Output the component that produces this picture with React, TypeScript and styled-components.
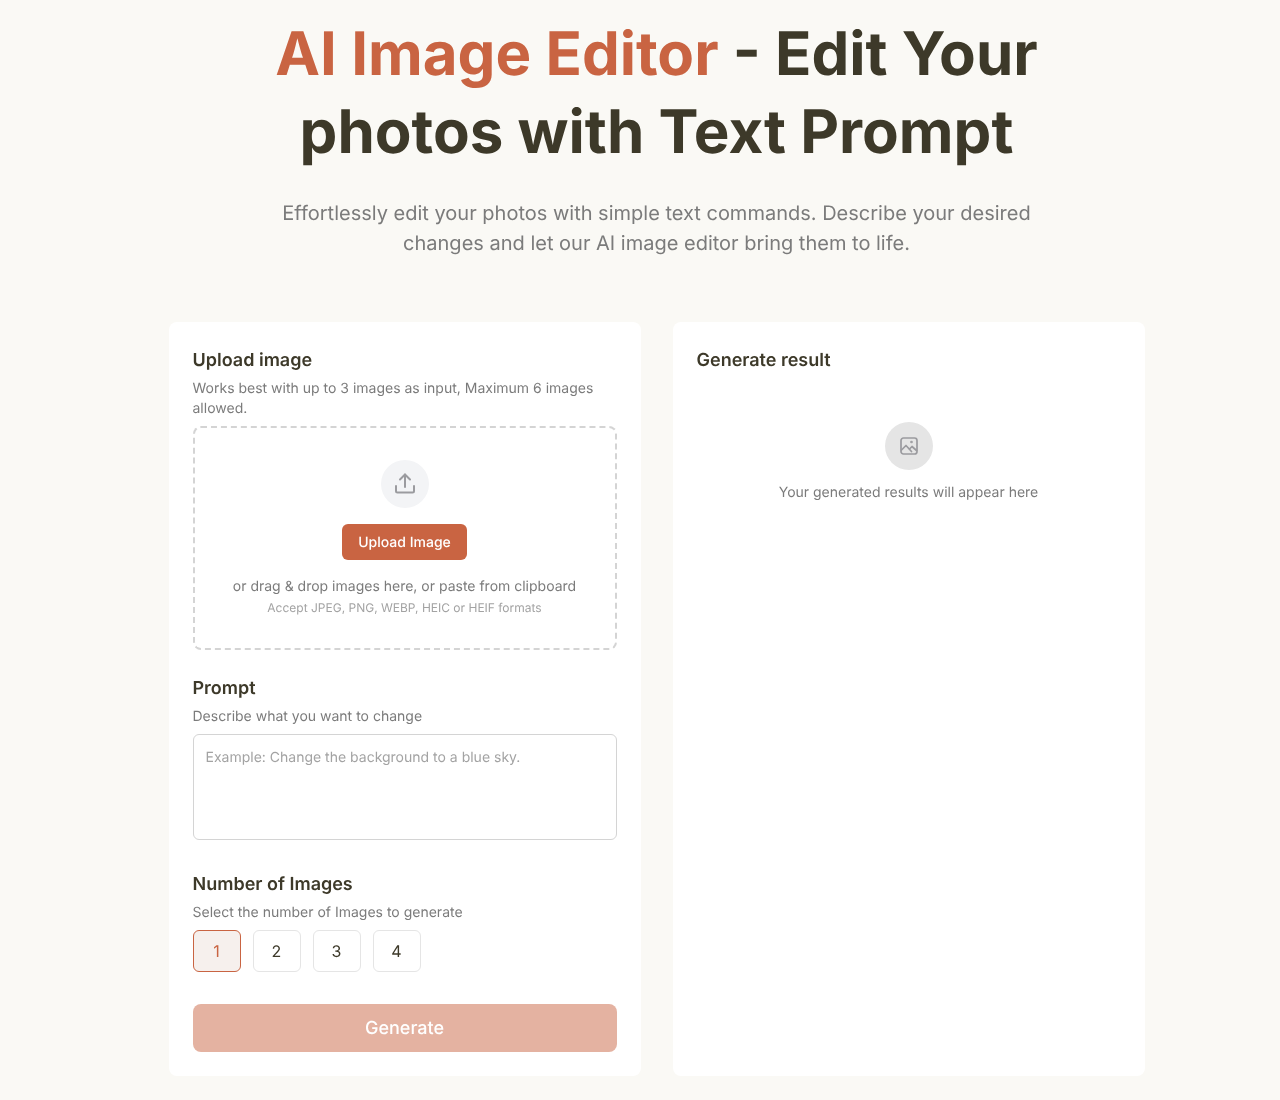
import React, { useState } from "react";
import styled, { createGlobalStyle } from "styled-components";

const GlobalStyle = createGlobalStyle`
  * {
    box-sizing: border-box;
  }
  html, body {
    margin: 0;
    background: #faf9f5;
  }
  body {
    font-family: Inter, "Liberation Sans", sans-serif;
    color: #3d3929;
    text-rendering: geometricPrecision;
  }
`;

const Page = styled.main`
  width: 1280px;
  height: 1100px;
  padding: 15px 135.5px 0 168.5px;
  overflow: hidden;
  will-change: transform;
`;

const Hero = styled.header`
  display: flex;
  flex-direction: column;
  align-items: center;
  margin-bottom: 64px;
`;

const Heading = styled.h1`
  width: 800px;
  margin: 0 0 27px;
  font-size: 60px;
  line-height: 78px;
  font-weight: 700;
  text-align: center;
  color: #3d3929;
`;

const Accent = styled.span`
  color: #c96442;
`;

const Lead = styled.p`
  width: 768px;
  margin: 0;
  font-size: 20px;
  line-height: 30px;
  text-align: center;
  color: #7b7b7b;
`;

const Columns = styled.div`
  display: grid;
  grid-template-columns: 472px 472px;
  gap: 32px;
`;

const Card = styled.section`
  height: 754px;
  padding: 24px;
  background: #fff;
  border-radius: 8px;
`;

const SectionTitle = styled.h2`
  margin: 0 0 3px;
  padding-top: 1px;
  font-size: 18px;
  line-height: 28px;
  font-weight: 600;
  color: #3d3929;
`;

const Hint = styled.p`
  margin: 0 0 7px;
  padding-top: 1px;
  font-size: 14px;
  line-height: 20px;
  color: #7b7b7b;
`;

const Dropzone = styled.div`
  display: flex;
  flex-direction: column;
  align-items: center;
  height: 224px;
  padding: 32px;
  margin-bottom: 24px;
  border: 2px dashed #d4d4d4;
  border-radius: 8px;
`;

const IconCircle = styled.div<{ $tone: string }>`
  display: flex;
  align-items: center;
  justify-content: center;
  width: 48px;
  height: 48px;
  flex: none;
  border-radius: 50%;
  background: ${(p) => p.$tone};
  color: #9b9b9f;
`;

const UploadButton = styled.button`
  width: 125px;
  height: 36px;
  margin: 16px 0;
  padding: 2px 0 0;
  border: 0;
  border-radius: 6px;
  background: #c96442;
  color: #fff;
  font: 500 14px/20px Inter, "Liberation Sans", sans-serif;
  text-rendering: geometricPrecision;
`;

const DropText = styled.p`
  margin: 0 0 3px;
  padding-top: 1px;
  font-size: 14px;
  line-height: 20px;
  color: #7b7b7b;
`;

const DropNote = styled.p`
  margin: 0;
  font-size: 12px;
  line-height: 16px;
  color: #a3a3a3;
`;

const PromptInput = styled.textarea`
  display: block;
  width: 100%;
  height: 106px;
  margin-bottom: 30px;
  padding: 13px 12px 11px;
  border: 1px solid #d4d4d4;
  border-radius: 6px;
  outline: none;
  resize: none;
  background: #fff;
  font: 400 14px/20px Inter, "Liberation Sans", sans-serif;
  color: #3d3929;
  text-rendering: geometricPrecision;

  &::placeholder {
    color: #a3a3a3;
    opacity: 1;
  }
`;

const CountRow = styled.div`
  display: flex;
  gap: 12px;
  margin-bottom: 32px;
`;

const CountButton = styled.button<{ $active: boolean }>`
  width: 48px;
  height: 42px;
  padding: 0;
  border: 1px solid ${(p) => (p.$active ? "#c96442" : "#e5e5e5")};
  border-radius: 6px;
  background: ${(p) => (p.$active ? "#f6f0ed" : "#fff")};
  color: ${(p) => (p.$active ? "#c96442" : "#3d3929")};
  font: 400 16px/24px Inter, "Liberation Sans", sans-serif;
  text-rendering: geometricPrecision;
`;

const GenerateButton = styled.button`
  display: block;
  width: 100%;
  height: 48px;
  padding: 2px 0 0;
  border: 0;
  border-radius: 8px;
  background: #e4b2a1;
  color: #fff;
  font: 500 18px/28px Inter, "Liberation Sans", sans-serif;
  text-rendering: geometricPrecision;
`;

const EmptyState = styled.div`
  display: flex;
  flex-direction: column;
  align-items: center;
  gap: 12px;
  margin-top: 47px;
`;

const EmptyText = styled.p`
  margin: 0;
  padding-top: 1px;
  font-size: 14px;
  line-height: 20px;
  color: #7b7b7b;
`;

const UploadIcon = () => (
  <svg width="24" height="24" viewBox="0 0 24 24" fill="none" stroke="currentColor" strokeWidth="2" strokeLinecap="round" strokeLinejoin="round">
    <path d="M12 15V2.5" />
    <path d="M7 7.5l5-5 5 5" />
    <path d="M3 14v5a1.5 1.5 0 0 0 1.5 1.5h15a1.5 1.5 0 0 0 1.5-1.5v-5" />
  </svg>
);

const PictureIcon = () => (
  <svg width="20" height="20" viewBox="0 0 20 20" fill="none" stroke="currentColor" strokeWidth="1.7" strokeLinecap="round" strokeLinejoin="round">
    <rect x="2" y="2" width="16" height="16" rx="2.5" />
    <path d="M2.5 14 7 9.5l5.5 6" />
    <path d="M10.5 13l2.5-2.5 4.5 4" />
    <circle cx="12.5" cy="6" r="0.5" fill="currentColor" />
  </svg>
);

const App = () => {
  const [count, setCount] = useState(1);

  return (
    <>
      <GlobalStyle />
      <Page>
        <Hero>
          <Heading>
            <Accent>AI Image Editor</Accent> - Edit Your photos with Text Prompt
          </Heading>
          <Lead>
            Effortlessly edit your photos with simple text commands. Describe
            your desired changes and let our AI image editor bring them to life.
          </Lead>
        </Hero>
        <Columns>
          <Card>
            <SectionTitle>Upload image</SectionTitle>
            <Hint>
              Works best with up to 3 images as input, Maximum 6 images allowed.
            </Hint>
            <Dropzone>
              <IconCircle $tone="#f3f4f6">
                <UploadIcon />
              </IconCircle>
              <UploadButton>Upload Image</UploadButton>
              <DropText>or drag &amp; drop images here, or paste from clipboard</DropText>
              <DropNote>Accept JPEG, PNG, WEBP, HEIC or HEIF formats</DropNote>
            </Dropzone>
            <SectionTitle>Prompt</SectionTitle>
            <Hint>Describe what you want to change</Hint>
            <PromptInput placeholder="Example: Change the background to a blue sky." />
            <SectionTitle>Number of Images</SectionTitle>
            <Hint>Select the number of Images to generate</Hint>
            <CountRow>
              {[1, 2, 3, 4].map((n) => (
                <CountButton key={n} $active={n === count} onClick={() => setCount(n)}>
                  {n}
                </CountButton>
              ))}
            </CountRow>
            <GenerateButton>Generate</GenerateButton>
          </Card>
          <Card>
            <SectionTitle>Generate result</SectionTitle>
            <EmptyState>
              <IconCircle $tone="#e5e5e5">
                <PictureIcon />
              </IconCircle>
              <EmptyText>Your generated results will appear here</EmptyText>
            </EmptyState>
          </Card>
        </Columns>
      </Page>
    </>
  );
};

export default App;
